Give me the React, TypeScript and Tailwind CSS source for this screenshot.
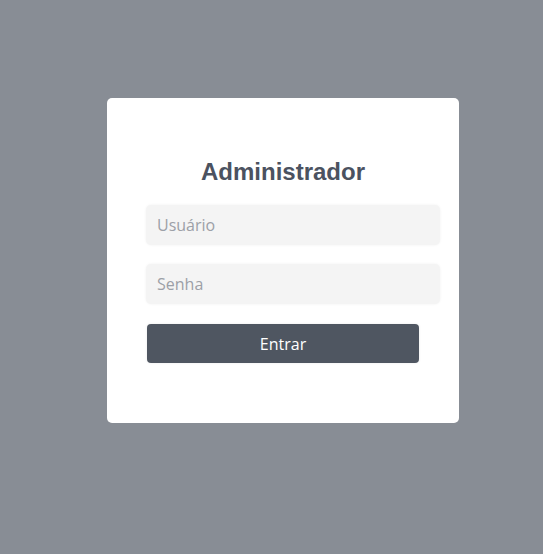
export default function App() {
  return (
    <div className="min-h-screen bg-[#888d95] pt-[98px]">
      <div className="ml-[107px] w-[352px] rounded-[5px] bg-white px-10 pt-[60px] pb-[60px]">
        <h1 className="text-center text-[24px] leading-[28px] font-bold text-[#4b5260] font-['Liberation_Sans',Arial,sans-serif]">
          Administrador
        </h1>
        <form className="mt-[19px] font-['Open_Sans',sans-serif]">
          <input
            type="text"
            placeholder="Usuário"
            className="box-content -ml-px block h-10 w-full rounded-[5px] bg-[#f4f4f4] px-[11px] py-0 text-[16px] text-[#4b5260] shadow-[0_0_3px_rgba(0,0,0,0.06)] outline-none placeholder:text-[#9ca0a7]"
          />
          <input
            type="password"
            placeholder="Senha"
            className="box-content -ml-px mt-[19px] block h-10 w-full rounded-[5px] bg-[#f4f4f4] px-[11px] py-0 text-[16px] text-[#4b5260] shadow-[0_0_3px_rgba(0,0,0,0.06)] outline-none placeholder:text-[#9ca0a7]"
          />
          <button
            type="button"
            className="mt-5 block h-[39px] w-full rounded-[4px] bg-[#4f5661] text-[16px] text-white shadow-[0_0_3px_rgba(0,0,0,0.08)]"
          >
            Entrar
          </button>
        </form>
      </div>
    </div>
  );
}
